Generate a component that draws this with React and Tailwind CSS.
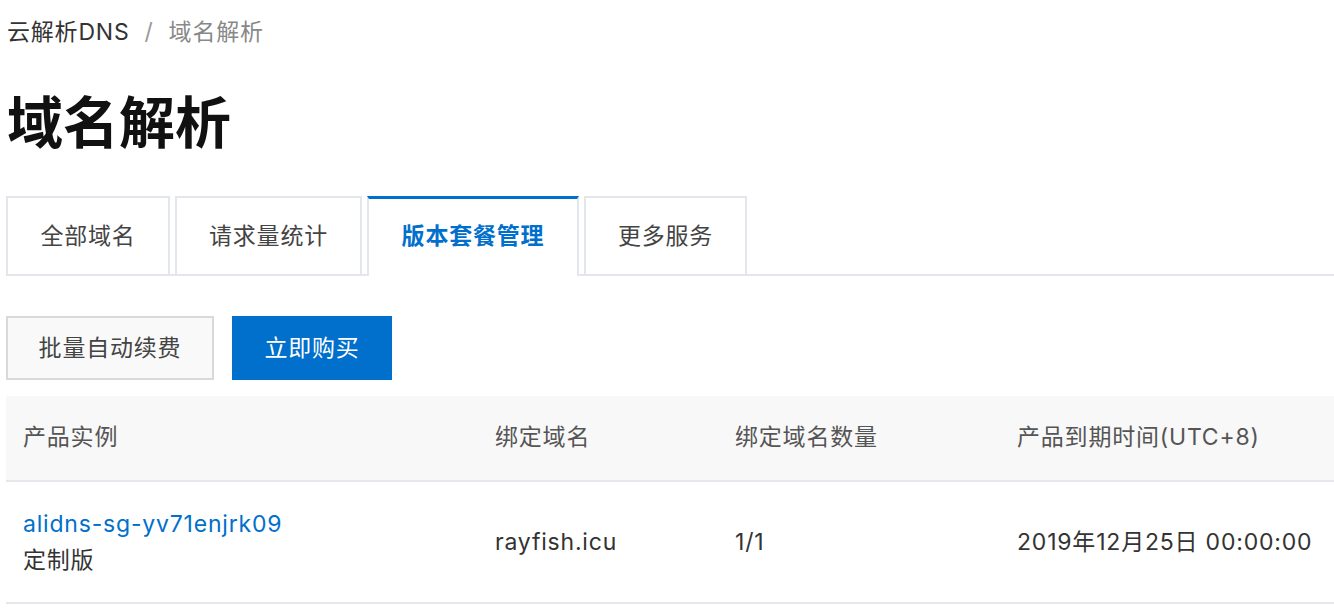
export default function App() {
  const tabs = ["全部域名", "请求量统计", "版本套餐管理", "更多服务"];
  const active = 2;
  const tabWidths = ["w-[164px]", "w-[187px]", "w-[212px]", "w-[163px]"];

  return (
    <div
      className="min-h-[610px] bg-white pl-[6px] tracking-[0.8px] text-[#333]"
      style={{ fontFamily: 'Inter, "Noto Sans CJK SC", sans-serif' }}
    >
      {/* Breadcrumb */}
      <div className="flex h-[64px] items-center pl-[1px] text-[23px]">
        <span className="text-[#333]">云解析DNS</span>
        <span className="mx-[15px] text-[#999]">/</span>
        <span className="text-[#888]">域名解析</span>
      </div>

      {/* Title */}
      <h1 className="mt-[28px] h-[62px] pl-[1px] text-[56px] font-bold leading-[62px] tracking-normal text-[#111]">
        域名解析
      </h1>

      {/* Tabs */}
      <div className="mt-[42px] flex border-b-2 border-[#e3e6ea]">
        {tabs.map((t, i) =>
          i === active ? (
            <div
              key={t}
              className={`${tabWidths[i]} -mb-[2px] mr-[5px] flex h-[80px] items-center justify-center border-x-2 border-t-[3px] border-x-[#e3e6ea] border-t-[#0070cc] bg-white pb-[2px] text-[23px] font-bold text-[#0070cc]`}
            >
              {t}
            </div>
          ) : (
            <div
              key={t}
              className={`${tabWidths[i]} mr-[5px] flex h-[78px] items-center justify-center border-2 border-b-0 border-[#e3e6ea] text-[23px] text-[#444]`}
            >
              {t}
            </div>
          )
        )}
      </div>

      {/* Actions */}
      <div className="mt-[40px] flex gap-[18px]">
        <button className="h-[64px] w-[208px] border-2 border-[#d9d9d9] bg-[#f9f9f9] text-[23px] text-[#444]">
          批量自动续费
        </button>
        <button className="h-[64px] w-[160px] bg-[#0070cc] text-[23px] text-white">
          立即购买
        </button>
      </div>

      {/* Table */}
      <div className="mt-[16px] text-[23px]">
        <div className="flex h-[86px] items-center border-b-2 border-[#e5e8ec] bg-[#f8f8f8] pb-[1px] text-[#555]">
          <div className="w-[489px] pl-[17px]">产品实例</div>
          <div className="w-[240px]">绑定域名</div>
          <div className="w-[282px]">绑定域名数量</div>
          <div className="flex-1">产品到期时间(UTC+8)</div>
        </div>
        <div className="flex h-[122px] items-center border-b-2 border-[#e5e8ec] text-[#333]">
          <div className="w-[489px] pl-[17px] leading-[36px]">
            <div className="text-[#0070cc]">alidns-sg-yv71enjrk09</div>
            <div>定制版</div>
          </div>
          <div className="w-[240px]">rayfish.icu</div>
          <div className="w-[282px]">1/1</div>
          <div className="flex-1">2019年12月25日 00:00:00</div>
        </div>
      </div>
    </div>
  );
}
